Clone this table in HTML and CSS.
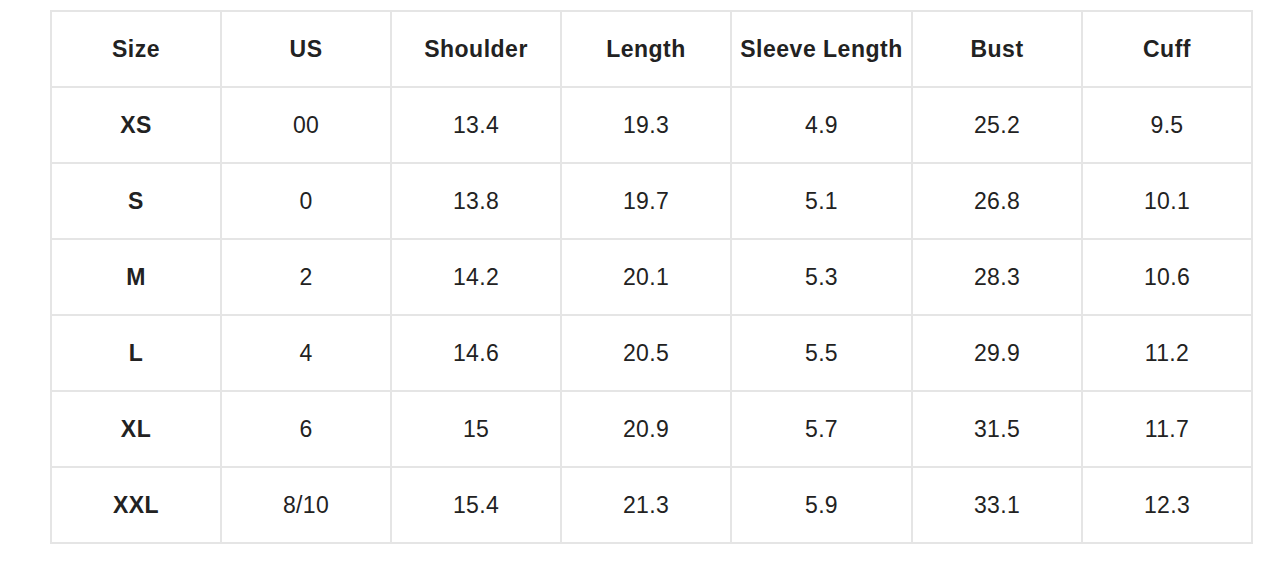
FILE: index.html
```html
<!DOCTYPE html>
<html>
<head>
<meta charset="utf-8">
<link rel="stylesheet" href="styles.css">
</head>
<body>
<table class="size-table">
  <colgroup>
    <col class="c"><col class="c"><col class="c"><col class="c"><col class="c-wide"><col class="c"><col class="c">
  </colgroup>
  <thead>
    <tr><th>Size</th><th>US</th><th>Shoulder</th><th>Length</th><th>Sleeve Length</th><th>Bust</th><th>Cuff</th></tr>
  </thead>
  <tbody>
    <tr><th>XS</th><td>00</td><td>13.4</td><td>19.3</td><td>4.9</td><td>25.2</td><td>9.5</td></tr>
    <tr><th>S</th><td>0</td><td>13.8</td><td>19.7</td><td>5.1</td><td>26.8</td><td>10.1</td></tr>
    <tr><th>M</th><td>2</td><td>14.2</td><td>20.1</td><td>5.3</td><td>28.3</td><td>10.6</td></tr>
    <tr><th>L</th><td>4</td><td>14.6</td><td>20.5</td><td>5.5</td><td>29.9</td><td>11.2</td></tr>
    <tr><th>XL</th><td>6</td><td>15</td><td>20.9</td><td>5.7</td><td>31.5</td><td>11.7</td></tr>
    <tr><th>XXL</th><td>8/10</td><td>15.4</td><td>21.3</td><td>5.9</td><td>33.1</td><td>12.3</td></tr>
  </tbody>
</table>
</body>
</html>
```
FILE: styles.css
```css
html, body {
  margin: 0;
  padding: 0;
  background: #ffffff;
}
body {
  padding: 10px 0 0 50px;
  font-family: "Liberation Sans", Arial, sans-serif;
  color: #222222;
}
.size-table {
  border-collapse: collapse;
  table-layout: fixed;
  width: 1202px;
}
.size-table .c { width: 170px; }
.size-table .c-wide { width: 181px; }
.size-table th,
.size-table td {
  border: 2px solid #e5e5e5;
  height: 74px;
  padding: 0;
  text-align: center;
  vertical-align: middle;
  font-size: 23px;
  line-height: 26px;
}
.size-table th {
  font-weight: bold;
  letter-spacing: 0.5px;
}
.size-table td {
  font-weight: normal;
  letter-spacing: 0.3px;
}
```
